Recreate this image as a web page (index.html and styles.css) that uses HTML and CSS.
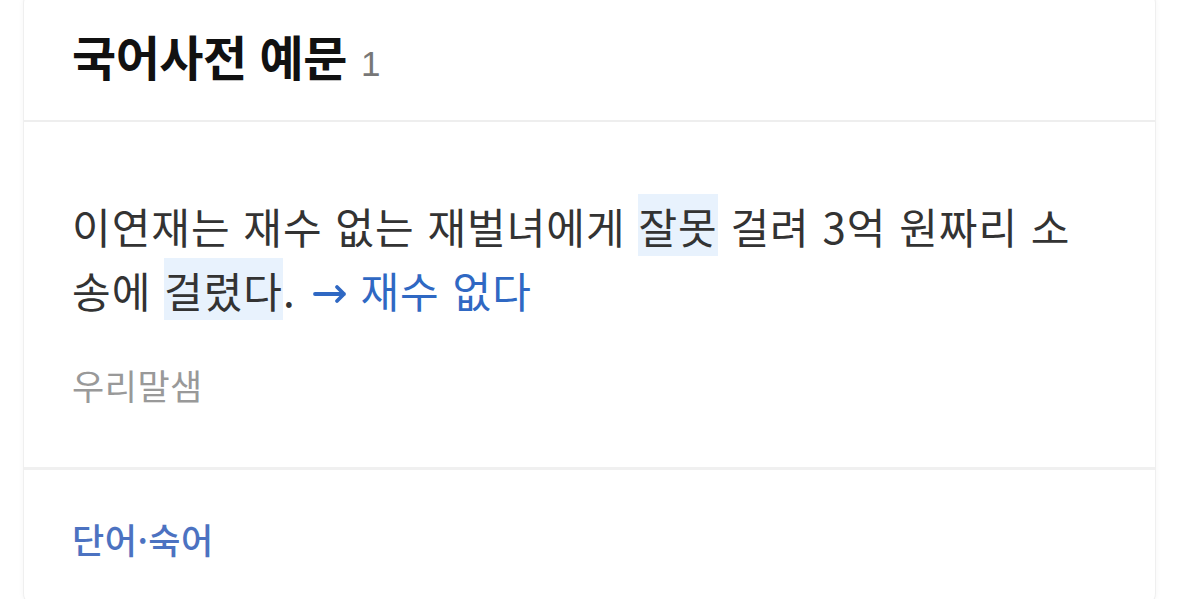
FILE: index.html
```html
<!DOCTYPE html>
<html lang="ko">
<head>
    <meta charset="UTF-8">
    <meta name="viewport" content="width=device-width, initial-scale=1.0">
    <title>국어사전 예문</title>
    <link rel="stylesheet" href="styles.css">
</head>
<body>
    <section class="dict-card">
        <header class="card-head">
            <h2>국어사전 예문<span class="count">1</span></h2>
        </header>

        <div class="example">
            <p class="sentence">이연재는 재수 없는 재벌녀에게 <mark>잘못</mark> 걸려 3억 원짜리 소송에 <mark>걸렸다</mark>. <a href="#" class="ref"><svg class="arrow" viewBox="0 0 36 20" width="36" height="20"><path d="M3 10H32M25 3L32 10L25 17" fill="none" stroke="currentColor" stroke-width="3.8" stroke-linecap="round" stroke-linejoin="round"/></svg>재수 없다</a></p>
            <p class="source">우리말샘</p>
        </div>

        <div class="card-foot">
            <a href="#" class="more">단어·숙어</a>
        </div>
    </section>
</body>
</html>
```

FILE: styles.css
```css
body {
    margin: 0;
    padding: 0 24px;
    background: #fff;
    font-family: 'Noto Sans CJK KR', 'Noto Sans', sans-serif;
    color: #333;
}

.dict-card {
    margin-top: -10px;
    background: #fff;
    border-radius: 14px;
    box-shadow: 0 0 0 1px #efefef, 0 0 6px rgba(0,0,0,0.06);
    overflow: hidden;
}

.card-head {
    height: 132px;
    padding: 0 48px;
    display: flex;
    align-items: center;
    border-bottom: 2px solid #eeeeee;
    box-sizing: border-box;
}

.card-head h2 {
    margin: 0;
    font-size: 48px;
    font-weight: 700;
    color: #111;
    letter-spacing: -0.5px;
}

.count {
    margin-left: 14px;
    font-family: 'Liberation Sans', Arial, sans-serif;
    font-size: 35px;
    font-weight: 400;
    color: #777;
    letter-spacing: 0;
}

.example {
    padding: 72px 48px 0;
    height: 348px;
    box-sizing: border-box;
    border-bottom: 3px solid #f0f0f0;
}

.sentence {
    margin: 0;
    font-size: 42px;
    line-height: 64px;
    letter-spacing: 1px;
    color: #333;
}

mark {
    background: #e8f2fd;
    color: inherit;
    padding: 1px 0 0;
}

.ref {
    color: #2f68c3;
    text-decoration: none;
}

.arrow {
    margin: 0 12px 0 4px;
    vertical-align: 4px;
}

.source {
    margin: 37px 0 0;
    font-size: 35px;
    color: #999;
    letter-spacing: 0.5px;
}

.card-foot {
    padding: 43px 48px;
}

.more {
    font-size: 35px;
    font-weight: 500;
    color: #4c72c1;
    text-decoration: none;
    letter-spacing: 0.5px;
}
```
